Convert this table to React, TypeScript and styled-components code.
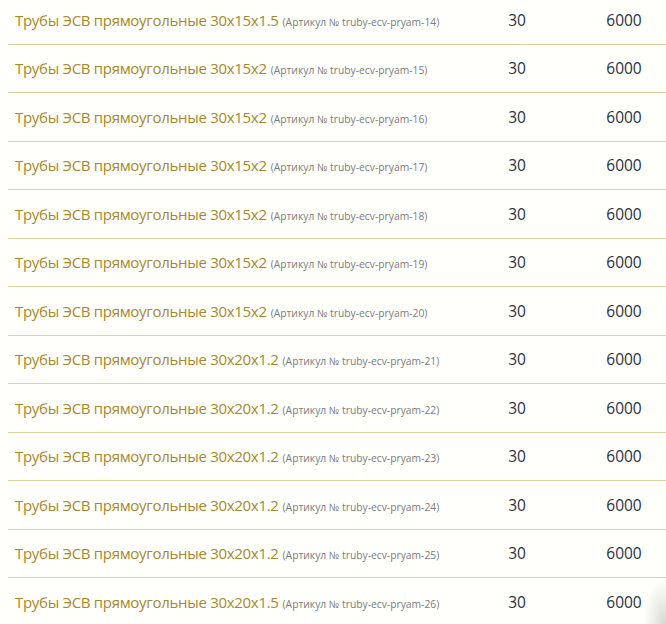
import React from "react";
import styled, { createGlobalStyle } from "styled-components";

const Global = createGlobalStyle`
  html, body { margin: 0; padding: 0; background: #fffffc; overflow: hidden; }
  body { padding-left: 8px; font-family: "Open Sans", "Noto Sans", sans-serif; }
`;

const Table = styled.div`
  width: 673px;
  margin-top: -4px;
  display: flex;
  flex-direction: column;
`;

const Row = styled.div`
  display: grid;
  grid-template-columns: 1fr 100px 114px;
  align-items: center;
  height: 47.5px;
  border-bottom: 1px solid #ddd1a2;
`;

const NameCell = styled.div`
  padding-left: 7px;
  white-space: nowrap;
  color: #a6882c;
  font-size: 15px;
  letter-spacing: -0.3px;
`;

const Sku = styled.span`
  color: #7b7b7b;
  font-size: 10.3px;
  letter-spacing: 0;
  margin-left: 4px;
`;

const NumCell = styled.div`
  text-align: center;
  color: #2a3142;
  font-size: 15.5px;
`;

const Corner = styled.div`
  position: fixed;
  right: 0;
  bottom: 0;
  width: 22px;
  height: 44px;
  background: radial-gradient(ellipse at 100% 100%, rgba(0, 0, 0, 0.16) 0%, rgba(0, 0, 0, 0.06) 45%, rgba(0, 0, 0, 0) 75%);
  pointer-events: none;
`;

const rows: [string, number][] = [
  ["30x15x1.5", 14],
  ["30x15x2", 15],
  ["30x15x2", 16],
  ["30x15x2", 17],
  ["30x15x2", 18],
  ["30x15x2", 19],
  ["30x15x2", 20],
  ["30x20x1.2", 21],
  ["30x20x1.2", 22],
  ["30x20x1.2", 23],
  ["30x20x1.2", 24],
  ["30x20x1.2", 25],
  ["30x20x1.5", 26],
];

export default function App() {
  return (
    <>
      <Global />
      <Table>
        {rows.map(([size, n]) => (
          <Row key={n}>
            <NameCell>
              Трубы ЭСВ прямоугольные {size}
              <Sku>(Артикул № truby-ecv-pryam-{n})</Sku>
            </NameCell>
            <NumCell>30</NumCell>
            <NumCell>6000</NumCell>
          </Row>
        ))}
      </Table>
      <Corner />
    </>
  );
}
